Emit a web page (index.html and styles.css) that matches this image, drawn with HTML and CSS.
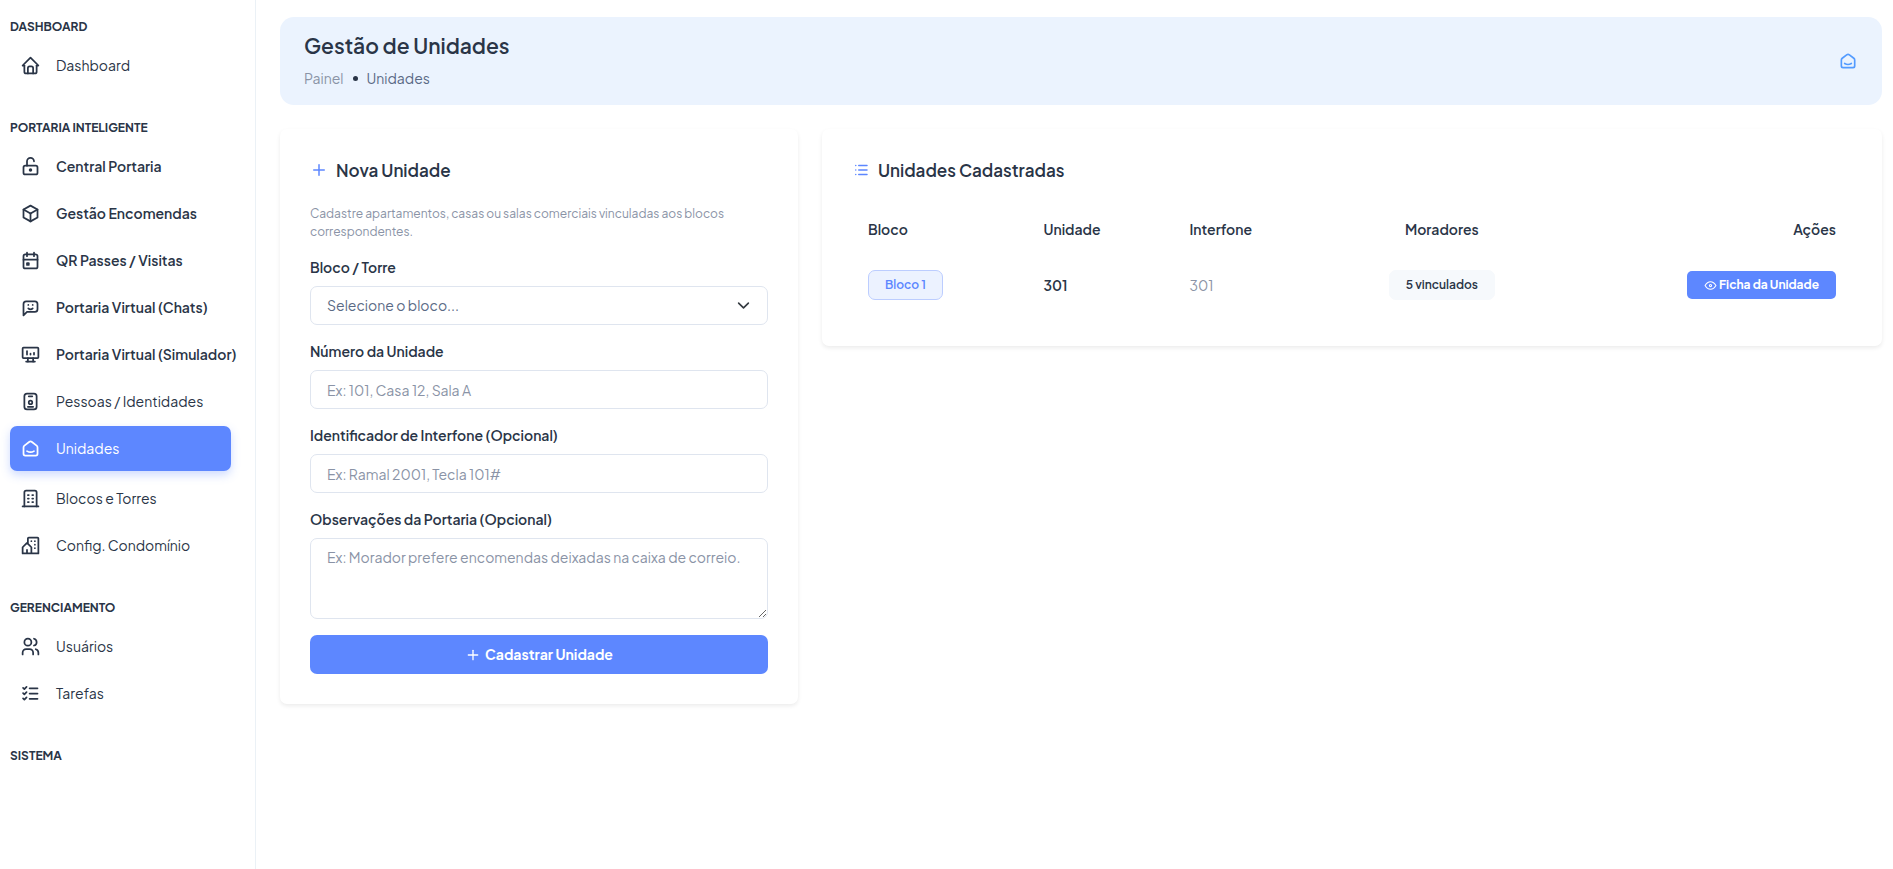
FILE: index.html
```html
<!doctype html>
<html lang="pt-BR">
  <head>
    <meta charset="UTF-8" />
    <meta name="viewport" content="width=device-width, initial-scale=1.0" />
    <title>Gestão de Unidades</title>
    <link rel="stylesheet" href="styles.css">
  </head>
  <body>
    <div class="page">
      <aside class="sidebar">
        <nav>
          <h2 class="nav-title">DASHBOARD</h2>
          <a class="nav-link" href="#">
            <svg class="icon" viewBox="0 0 24 24"><path d="M5 12H3l9-9 9 9h-2" /><path d="M5 12v7a2 2 0 0 0 2 2h10a2 2 0 0 0 2-2v-7" /><path d="M9 21v-6a2 2 0 0 1 2-2h2a2 2 0 0 1 2 2v6" /></svg>
            <span>Dashboard</span>
          </a>

          <h2 class="nav-title">PORTARIA INTELIGENTE</h2>
          <a class="nav-link strong" href="#">
            <svg class="icon" viewBox="0 0 24 24"><rect x="4" y="11" width="16" height="10" rx="2" /><circle cx="12" cy="16" r="1" /><path d="M8 11V6a4 4 0 0 1 8 0" /></svg>
            <span>Central Portaria</span>
          </a>
          <a class="nav-link strong" href="#">
            <svg class="icon" viewBox="0 0 24 24"><path d="M12 3l8 4.5v9L12 21l-8-4.5v-9z" /><path d="M12 12l8-4.5" /><path d="M12 12v9" /><path d="M12 12L4 7.5" /></svg>
            <span>Gestão Encomendas</span>
          </a>
          <a class="nav-link strong" href="#">
            <svg class="icon" viewBox="0 0 24 24"><rect x="4" y="5" width="16" height="16" rx="2" /><path d="M16 3v4" /><path d="M8 3v4" /><path d="M4 11h16" /><path d="M8 15h2v2H8z" /></svg>
            <span>QR Passes / Visitas</span>
          </a>
          <a class="nav-link strong" href="#">
            <svg class="icon" viewBox="0 0 24 24"><path d="M4 21V8a3 3 0 0 1 3-3h10a3 3 0 0 1 3 3v6a3 3 0 0 1-3 3H8z" /><path d="M9.5 9h.01" /><path d="M14.5 9h.01" /><path d="M9.5 13a3.5 3.5 0 0 0 5 0" /></svg>
            <span>Portaria Virtual (Chats)</span>
          </a>
          <a class="nav-link strong" href="#">
            <svg class="icon" viewBox="0 0 24 24"><rect x="3" y="4" width="18" height="12" rx="1" /><path d="M7 20h10" /><path d="M9 16v4" /><path d="M15 16v4" /><path d="M8 12V8" /><path d="M12 12v-1" /><path d="M16 12v-2" /></svg>
            <span>Portaria Virtual (Simulador)</span>
          </a>
          <a class="nav-link" href="#">
            <svg class="icon" viewBox="0 0 24 24"><rect x="5" y="3" width="14" height="18" rx="3" /><circle cx="12" cy="13" r="2" /><path d="M10 6h4" /><path d="M9 18h6" /></svg>
            <span>Pessoas / Identidades</span>
          </a>
          <a class="nav-link active" href="#" aria-current="page">
            <svg class="icon" viewBox="0 0 24 24"><path d="M19 8.71l-5.333-4.148a2.666 2.666 0 0 0-3.274 0L5.059 8.71a2.665 2.665 0 0 0-1.029 2.105v7.2a2 2 0 0 0 2 2h12a2 2 0 0 0 2-2v-7.2c0-.823-.38-1.6-1.03-2.105" /><path d="M16 15c-2.21 1.333-5.792 1.333-8 0" /></svg>
            <span>Unidades</span>
          </a>
          <a class="nav-link" href="#">
            <svg class="icon" viewBox="0 0 24 24"><path d="M3 21h18" /><path d="M9 8h1" /><path d="M9 12h1" /><path d="M9 16h1" /><path d="M14 8h1" /><path d="M14 12h1" /><path d="M14 16h1" /><path d="M5 21V5a2 2 0 0 1 2-2h10a2 2 0 0 1 2 2v16" /></svg>
            <span>Blocos e Torres</span>
          </a>
          <a class="nav-link" href="#">
            <svg class="icon" viewBox="0 0 24 24"><path d="M8 9l5 5v7H8v-4m0 4H3v-7l5-5m1 1V4a1 1 0 0 1 1-1h10a1 1 0 0 1 1 1v17h-8" /><path d="M13 7v.01" /><path d="M17 7v.01" /><path d="M17 11v.01" /><path d="M17 15v.01" /></svg>
            <span>Config. Condomínio</span>
          </a>

          <h2 class="nav-title">GERENCIAMENTO</h2>
          <a class="nav-link" href="#">
            <svg class="icon" viewBox="0 0 24 24"><circle cx="9" cy="7" r="4" /><path d="M3 21v-2a4 4 0 0 1 4-4h4a4 4 0 0 1 4 4v2" /><path d="M16 3.13a4 4 0 0 1 0 7.75" /><path d="M21 21v-2a4 4 0 0 0-3-3.85" /></svg>
            <span>Usuários</span>
          </a>
          <a class="nav-link" href="#">
            <svg class="icon" viewBox="0 0 24 24"><path d="M3.5 5.5L5 7l2.5-2.5" /><path d="M3.5 11.5L5 13l2.5-2.5" /><path d="M3.5 17.5L5 19l2.5-2.5" /><path d="M11 6h9" /><path d="M11 12h9" /><path d="M11 18h9" /></svg>
            <span>Tarefas</span>
          </a>

          <h2 class="nav-title">SISTEMA</h2>
        </nav>
      </aside>

      <main class="content">
        <header class="page-header">
          <div>
            <h1>Gestão de Unidades</h1>
            <div class="breadcrumb">
              <a href="#">Painel</a>
              <span class="dot"></span>
              <span>Unidades</span>
            </div>
          </div>
          <a class="header-icon" href="#" aria-label="Unidades">
            <svg class="icon" viewBox="0 0 24 24"><path d="M19 8.71l-5.333-4.148a2.666 2.666 0 0 0-3.274 0L5.059 8.71a2.665 2.665 0 0 0-1.029 2.105v7.2a2 2 0 0 0 2 2h12a2 2 0 0 0 2-2v-7.2c0-.823-.38-1.6-1.03-2.105" /><path d="M16 15c-2.21 1.333-5.792 1.333-8 0" /></svg>
          </a>
        </header>

        <div class="columns">
          <section class="card">
            <h2 class="card-title">
              <svg class="icon" viewBox="0 0 24 24"><path d="M12 5v14" /><path d="M5 12h14" /></svg>
              Nova Unidade
            </h2>
            <p class="card-text">Cadastre apartamentos, casas ou salas comerciais vinculadas aos blocos correspondentes.</p>
            <form class="unit-form">
              <div class="form-group">
                <label for="bloco">Bloco / Torre</label>
                <div class="select-wrap">
                  <select id="bloco" required>
                    <option value="">Selecione o bloco...</option>
                    <option value="1">Bloco 1</option>
                  </select>
                  <svg class="chevron" viewBox="0 0 16 16"><path d="M2 5l6 6 6-6" /></svg>
                </div>
              </div>
              <div class="form-group">
                <label for="numero">Número da Unidade</label>
                <input type="text" id="numero" placeholder="Ex: 101, Casa 12, Sala A" required />
              </div>
              <div class="form-group">
                <label for="interfone">Identificador de Interfone (Opcional)</label>
                <input type="text" id="interfone" placeholder="Ex: Ramal 2001, Tecla 101#" />
              </div>
              <div class="form-group">
                <label for="observacoes">Observações da Portaria (Opcional)</label>
                <textarea id="observacoes" rows="3" placeholder="Ex: Morador prefere encomendas deixadas na caixa de correio."></textarea>
              </div>
              <button class="btn" type="submit">
                <svg class="icon" viewBox="0 0 24 24"><path d="M12 5v14" /><path d="M5 12h14" /></svg>
                Cadastrar Unidade
              </button>
            </form>
          </section>

          <section class="card">
            <h2 class="card-title">
              <svg class="icon" viewBox="0 0 24 24"><path d="M9 6h11" /><path d="M9 12h11" /><path d="M9 18h11" /><path d="M5 6v.01" /><path d="M5 12v.01" /><path d="M5 18v.01" /></svg>
              Unidades Cadastradas
            </h2>
            <table class="units">
              <thead>
                <tr>
                  <th>Bloco</th>
                  <th>Unidade</th>
                  <th>Interfone</th>
                  <th class="center">Moradores</th>
                  <th class="end">Ações</th>
                </tr>
              </thead>
              <tbody>
                <tr>
                  <td><span class="badge primary">Bloco 1</span></td>
                  <td class="unit">301</td>
                  <td class="muted">301</td>
                  <td class="center"><span class="badge">5 vinculados</span></td>
                  <td class="end">
                    <button class="btn btn-sm" type="button">
                      <svg class="icon" viewBox="0 0 24 24"><circle cx="12" cy="12" r="2" /><path d="M22 12c-2.667 4.667-6 7-10 7s-7.333-2.333-10-7c2.667-4.667 6-7 10-7s7.333 2.333 10 7" /></svg>
                      Ficha da Unidade
                    </button>
                  </td>
                </tr>
              </tbody>
            </table>
          </section>
        </div>
      </main>
    </div>
  </body>
</html>
```
FILE: styles.css
```css
* {
  box-sizing: border-box;
}
body {
  margin: 0;
  font-family: "Plus Jakarta Sans", Inter, sans-serif;
  font-size: 14px;
  line-height: 21px;
  color: #2a3547;
  background-color: #ffffff;
}
h1,
h2,
p {
  margin: 0;
}
a {
  color: inherit;
  text-decoration: none;
}
.icon {
  flex: none;
  width: 18px;
  height: 18px;
  fill: none;
  stroke: currentColor;
  stroke-width: 2;
  stroke-linecap: round;
  stroke-linejoin: round;
}
.page {
  display: flex;
  min-height: 100vh;
}

/* Menu lateral */
.sidebar {
  flex: none;
  width: 256px;
  padding: 17px 10px;
  border-right: 1px solid #ebf1f6;
}
.nav-title {
  margin-bottom: 6px;
  font-size: 12px;
  font-weight: 700;
  line-height: 20px;
}
.nav-link + .nav-title {
  margin-top: 30px;
}
.nav-link {
  display: flex;
  align-items: center;
  gap: 15px;
  height: 45px;
  margin: 0 14px 2px 0;
  padding: 0 10px;
  border-radius: 7px;
  white-space: nowrap;
}
.nav-link .icon {
  width: 21px;
  height: 21px;
}
.nav-link.strong {
  font-weight: 600;
}
.nav-link.active {
  margin-bottom: 5px;
  color: #ffffff;
  background-color: #5d87ff;
  box-shadow: 0 4px 10px rgba(93, 135, 255, 0.3);
}

.content {
  flex: 1;
  min-width: 0;
  padding: 17px 11px 24px 24px;
}
.page-header {
  display: flex;
  align-items: center;
  justify-content: space-between;
  margin-bottom: 24px;
  padding: 16px 24px;
  border-radius: 14px;
  background-color: #ebf3fe;
}
.page-header h1 {
  margin-bottom: 9px;
  font-size: 21px;
  font-weight: 600;
  line-height: 26px;
}
.breadcrumb {
  display: flex;
  align-items: center;
  gap: 9px;
  color: #5a6a85;
}
.breadcrumb a {
  color: #8a93a6;
}
.dot {
  width: 5px;
  height: 5px;
  border-radius: 50%;
  background-color: #2a3547;
}
.header-icon {
  display: flex;
  color: #539bff;
}
.header-icon .icon {
  width: 20px;
  height: 20px;
}

.columns {
  display: grid;
  grid-template-columns: repeat(3, minmax(0, 1fr));
  align-items: start;
  gap: 24px;
}
.card {
  padding: 30px;
  border-radius: 7px;
  background-color: #ffffff;
  box-shadow: 0 2px 4px rgba(0, 0, 0, 0.08);
}
.card + .card {
  grid-column: span 2;
}
.card-title {
  display: flex;
  align-items: center;
  gap: 8px;
  margin-bottom: 24px;
  font-size: 17px;
  font-weight: 600;
  line-height: 22px;
}
.card-title .icon {
  color: #5d87ff;
}
.card-text {
  margin-bottom: 16px;
  font-size: 12px;
  line-height: 18px;
  color: #8a93a6;
}

/* Formulário */
.form-group {
  margin-bottom: 16px;
}
label {
  display: block;
  margin-bottom: 8px;
  font-weight: 600;
}
input,
select,
textarea {
  display: block;
  width: 100%;
  padding: 8px 16px;
  border: 1px solid #dfe5ef;
  border-radius: 7px;
  font: inherit;
  color: #5a6a85;
  background-color: transparent;
}
select {
  appearance: none;
}
input,
select {
  height: 39px;
}
textarea {
  height: 81px;
  resize: vertical;
}
::placeholder {
  color: #8a93a6;
  opacity: 1;
}
.select-wrap {
  display: grid;
  align-items: center;
}
.select-wrap > * {
  grid-area: 1 / 1;
}
.chevron {
  justify-self: end;
  width: 13px;
  height: 13px;
  margin-right: 18px;
  fill: none;
  stroke: #343a40;
  stroke-width: 2;
  stroke-linecap: round;
  stroke-linejoin: round;
  pointer-events: none;
}
.btn {
  display: flex;
  align-items: center;
  justify-content: center;
  gap: 4px;
  width: 100%;
  padding: 9px 16px;
  border: none;
  border-radius: 7px;
  font: inherit;
  font-weight: 700;
  color: #ffffff;
  background-color: #5d87ff;
  cursor: pointer;
}
.btn .icon {
  width: 16px;
  height: 16px;
}
.btn-sm {
  display: inline-flex;
  gap: 2px;
  width: auto;
  padding: 5px 17px;
  border-radius: 5px;
  font-size: 12px;
  line-height: 18px;
  vertical-align: middle;
}
.btn-sm .icon {
  width: 13px;
  height: 13px;
}

/* Tabela */
.units {
  width: 100%;
  border-collapse: collapse;
}
.units th,
.units td {
  padding: 16px;
  text-align: left;
  white-space: nowrap;
}
.units th {
  padding: 14px 16px;
  font-weight: 600;
}
.units .center {
  text-align: center;
}
.units .end {
  text-align: right;
}
.unit {
  font-weight: 600;
}
.muted {
  color: #8a93a6;
}
.badge {
  display: inline-block;
  padding: 5px 16px;
  border: 1px solid #f6f9fc;
  border-radius: 7px;
  font-size: 12px;
  font-weight: 600;
  line-height: 18px;
  vertical-align: middle;
  background-color: #f6f9fc;
}
.badge.primary {
  border-color: #bccdff;
  color: #5d87ff;
  background-color: #ecf2ff;
}
```
